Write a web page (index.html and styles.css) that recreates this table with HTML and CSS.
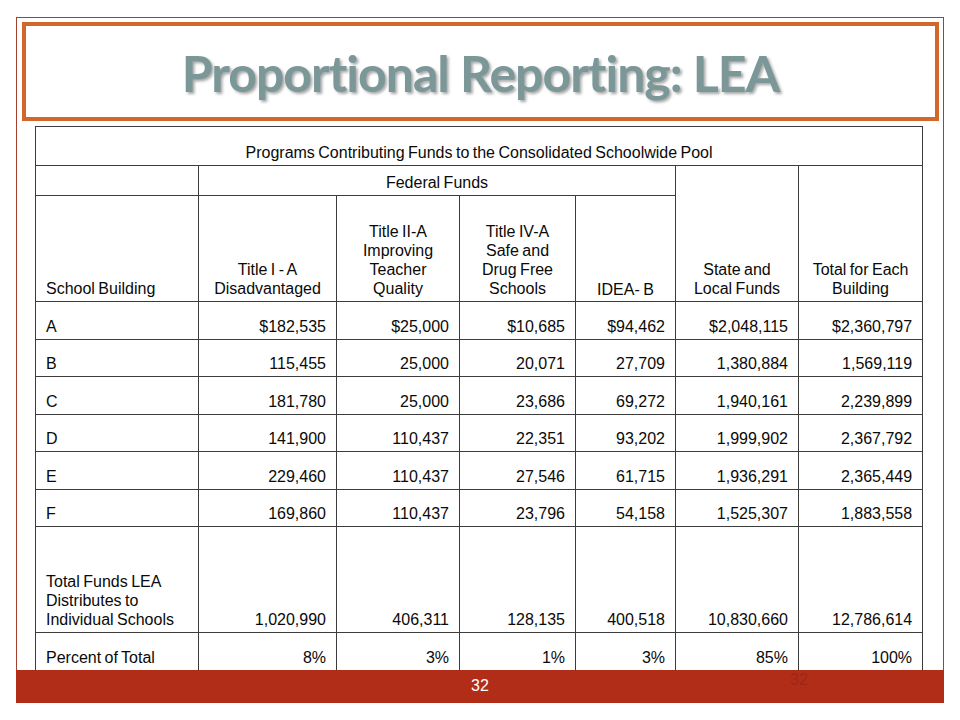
FILE: index.html
```html
<!DOCTYPE html>
<html>
<head>
<meta charset="utf-8">
<link rel="stylesheet" href="styles.css">
</head>
<body>
<div class="slide">
  <div class="frame">
    <div class="title-box">
      <h1 class="title">Proportional Reporting: LEA</h1>
    </div>
    <table class="grid">
      <colgroup>
        <col class="c1"><col class="c2"><col class="c3"><col class="c4"><col class="c5"><col class="c6"><col class="c7">
      </colgroup>
      <tr class="r-top">
        <td colspan="7" class="center">Programs Contributing Funds to the Consolidated Schoolwide Pool</td>
      </tr>
      <tr class="r-fed">
        <td></td>
        <td colspan="4" class="center">Federal Funds</td>
        <td rowspan="2" class="center">State and<br>Local Funds</td>
        <td rowspan="2" class="center">Total for Each<br>Building</td>
      </tr>
      <tr class="r-head">
        <td class="left">School Building</td>
        <td class="center">Title I - A<br>Disadvantaged</td>
        <td class="center">Title II-A<br>Improving<br>Teacher<br>Quality</td>
        <td class="center">Title IV-A<br>Safe and<br>Drug Free<br>Schools</td>
        <td class="center idea">IDEA- B</td>
      </tr>
      <tr class="r-data r-a">
        <td class="left">A</td><td>$182,535</td><td>$25,000</td><td>$10,685</td><td>$94,462</td><td>$2,048,115</td><td>$2,360,797</td>
      </tr>
      <tr class="r-data r-b">
        <td class="left">B</td><td>115,455</td><td>25,000</td><td>20,071</td><td>27,709</td><td>1,380,884</td><td>1,569,119</td>
      </tr>
      <tr class="r-data r-a">
        <td class="left">C</td><td>181,780</td><td>25,000</td><td>23,686</td><td>69,272</td><td>1,940,161</td><td>2,239,899</td>
      </tr>
      <tr class="r-data r-b">
        <td class="left">D</td><td>141,900</td><td>110,437</td><td>22,351</td><td>93,202</td><td>1,999,902</td><td>2,367,792</td>
      </tr>
      <tr class="r-data r-a">
        <td class="left">E</td><td>229,460</td><td>110,437</td><td>27,546</td><td>61,715</td><td>1,936,291</td><td>2,365,449</td>
      </tr>
      <tr class="r-data r-b">
        <td class="left">F</td><td>169,860</td><td>110,437</td><td>23,796</td><td>54,158</td><td>1,525,307</td><td>1,883,558</td>
      </tr>
      <tr class="r-total">
        <td class="left">Total Funds LEA<br>Distributes to<br>Individual Schools</td><td>1,020,990</td><td>406,311</td><td>128,135</td><td>400,518</td><td>10,830,660</td><td>12,786,614</td>
      </tr>
      <tr class="r-pct">
        <td class="left">Percent of Total</td><td>8%</td><td>3%</td><td>1%</td><td>3%</td><td>85%</td><td>100%</td>
      </tr>
    </table>
  </div>
  <div class="footer">
    <span class="page-num">32</span>
    <span class="ghost-num">32</span>
  </div>
</div>
</body>
</html>
```

FILE: styles.css
```css
html, body {
  margin: 0;
  padding: 0;
  background: #ffffff;
}

.slide {
  width: 928px;
  margin: 17px 0 0 16px;
}

.frame {
  border: 1px solid #a4412e;
  border-bottom: none;
  padding: 4px 4px 0 5px;
}

.title-box {
  border: 4px solid #d2672b;
  height: 91px;
  display: flex;
  align-items: center;
  justify-content: center;
}

.title {
  margin: 2px 0 0 0;
  font-family: Lato, "Open Sans", sans-serif;
  font-weight: 700;
  font-size: 50px;
  color: #7b9798;
  text-shadow: 2px 2px 3px rgba(0, 0, 0, 0.35);
  letter-spacing: -1px;
  font-variant-ligatures: none;
}

.grid {
  margin: 5px 0 0 13px;
  border-collapse: collapse;
  table-layout: fixed;
  width: 887px;
  font-family: "Liberation Sans", Arial, sans-serif;
  font-size: 16px;
  word-spacing: -1px;
  color: #0a0a0a;
}

.c1 { width: 163px; }
.c2 { width: 138px; }
.c3 { width: 123px; }
.c4 { width: 116px; }
.c5 { width: 100px; }
.c6 { width: 123px; }
.c7 { width: 124px; }

.grid td {
  border: 1px solid #3c3c3c;
  vertical-align: bottom;
  text-align: right;
  padding: 0 10px 3px 10px;
  line-height: 19px;
  overflow: hidden;
  white-space: nowrap;
}

.grid td.left {
  text-align: left;
}

.grid td.center {
  text-align: center;
  padding-left: 2px;
  padding-right: 2px;
}

.grid td.idea {
  padding-bottom: 2px;
}

.r-top { height: 39px; }
.r-fed { height: 30px; }
.r-head { height: 106px; }
.r-a { height: 38px; }
.r-b { height: 37px; }
.r-total { height: 106px; }
.r-pct { height: 37px; }
.r-pct td { border-bottom: none; }

.footer {
  height: 33px;
  background: #b12d18;
  position: relative;
  display: flex;
  justify-content: center;
  align-items: center;
}

.page-num {
  font-family: "Liberation Sans", Arial, sans-serif;
  font-size: 16px;
  color: #ffffff;
}

.ghost-num {
  position: absolute;
  left: 774px;
  top: 1px;
  font-family: "Liberation Sans", Arial, sans-serif;
  font-size: 16px;
  color: #9e2715;
}
```
